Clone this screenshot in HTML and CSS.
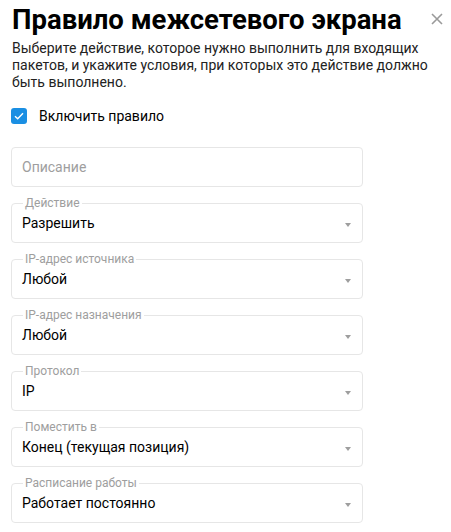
FILE: index.html
```html
<!DOCTYPE html>
<html lang="ru">
<head>
    <meta charset="UTF-8">
    <title>Правило межсетевого экрана</title>
    <link rel="stylesheet" href="styles.css">
</head>
<body>
    <div class="dialog">
        <div class="header">
            <h2>Правило межсетевого экрана</h2>
            <button class="close" aria-label="Закрыть">
                <svg width="12" height="12" viewBox="0 0 12 12"><path d="M1 1L11 11M11 1L1 11" stroke="#9a9a9a" stroke-width="1.6"/></svg>
            </button>
        </div>
        <p class="intro">Выберите действие, которое нужно выполнить для входящих пакетов, и укажите условия, при которых это действие должно быть выполнено.</p>

        <label class="check">
            <span class="box">
                <svg width="10" height="8" viewBox="0 0 10 8"><path d="M1 4.2L3.7 6.8L9 1.2" fill="none" stroke="#fff" stroke-width="1.4"/></svg>
            </span>
            Включить правило
        </label>

        <input class="field" type="text" placeholder="Описание">

        <fieldset class="select">
            <legend>Действие</legend>
            <span class="value">Разрешить</span>
            <span class="arrow"></span>
        </fieldset>
        <fieldset class="select">
            <legend>IP-адрес источника</legend>
            <span class="value">Любой</span>
            <span class="arrow"></span>
        </fieldset>
        <fieldset class="select">
            <legend>IP-адрес назначения</legend>
            <span class="value">Любой</span>
            <span class="arrow"></span>
        </fieldset>
        <fieldset class="select">
            <legend>Протокол</legend>
            <span class="value">IP</span>
            <span class="arrow"></span>
        </fieldset>
        <fieldset class="select">
            <legend>Поместить в</legend>
            <span class="value">Конец (текущая позиция)</span>
            <span class="arrow"></span>
        </fieldset>
        <fieldset class="select">
            <legend>Расписание работы</legend>
            <span class="value">Работает постоянно</span>
            <span class="arrow"></span>
        </fieldset>
    </div>
</body>
</html>
```

FILE: styles.css
```css
body {
    margin: 0;
    background: #fff;
    font-family: Roboto, 'Liberation Sans', sans-serif;
    color: #000;
}

.dialog {
    padding: 0 8px 0 11px;
}

.header {
    display: flex;
    justify-content: space-between;
    align-items: flex-start;
}

h2 {
    margin: 2px 0 0 1px;
    font-size: 27.5px;
    font-weight: 700;
    line-height: 35px;
}

.close {
    border: none;
    background: none;
    padding: 0;
    margin: 13px 0 0 0;
    width: 12px;
    height: 12px;
    cursor: pointer;
}

.close svg {
    display: block;
}

.intro {
    margin: 3px 0 0 1px;
    font-size: 14px;
    line-height: 17px;
    color: #222;
}

.check {
    display: flex;
    align-items: center;
    margin-top: 17px;
    font-size: 14px;
    height: 16px;
}

.box {
    width: 16px;
    height: 16px;
    border-radius: 3px;
    background: #1a8fe3;
    display: flex;
    align-items: center;
    justify-content: center;
    margin-right: 12px;
}

.field {
    display: block;
    box-sizing: border-box;
    width: 352px;
    height: 40px;
    margin-top: 23px;
    padding: 0 10px;
    border: 1px solid #e6e6e6;
    border-radius: 4px;
    font-family: inherit;
    font-size: 14px;
    outline: none;
}

.field::placeholder {
    color: #9e9e9e;
}

.select {
    position: relative;
    box-sizing: border-box;
    width: 352px;
    height: 46px;
    margin: 10px 0 0 0;
    padding: 0 10px;
    border: 1px solid #e6e6e6;
    border-radius: 4px;
    display: flex;
    align-items: center;
}

.select legend {
    padding: 0 2px;
    margin-left: 1px;
    font-size: 12px;
    line-height: 12px;
    color: #9e9e9e;
}

.value {
    font-size: 14px;
    margin-top: -6px;
}

.arrow {
    position: absolute;
    right: 11px;
    top: 14px;
    width: 0;
    height: 0;
    border-left: 3px solid transparent;
    border-right: 3px solid transparent;
    border-top: 4px solid #9e9e9e;
}
```
